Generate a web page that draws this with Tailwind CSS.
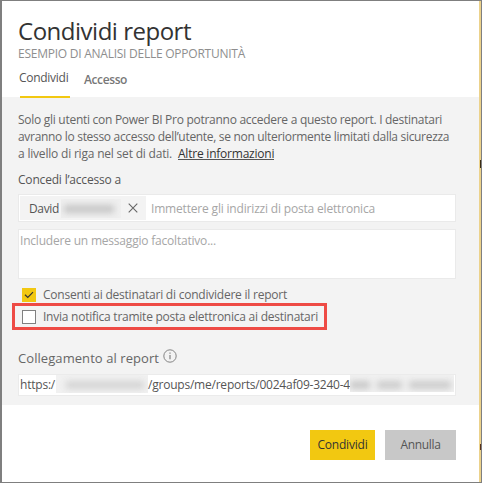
<!DOCTYPE html>
<html lang="it">
<head>
<meta charset="utf-8">
<title>Condividi report</title>
<script src="https://cdn.jsdelivr.net/npm/@tailwindcss/browser@4"></script>
</head>
<body class="h-[483px] w-[482px] overflow-hidden bg-[#7f7f7f] font-['Open_Sans',sans-serif] text-[12px] text-[#666]">
<div class="flex h-[483px] w-[482px] border-t border-b border-l-2 border-r border-[#7f7f7f] bg-white">
  <main class="flex w-[477px] flex-col">
    <header class="flex h-24 shrink-0 flex-col pl-4 pt-[16px] whitespace-nowrap">
      <h1 class="h-7 text-[24px] leading-7 tracking-[-0.488px] text-[#333]">Condividi report</h1>
      <p class="mt-[2px] h-[14px] leading-[14px] tracking-[-0.248px] text-[#8e8e8e]">ESEMPIO DI ANALISI DELLE OPPORTUNITÀ</p>
      <nav class="mt-[8px] flex">
        <a class="relative ml-0.5 h-[29px] w-[50px] border-b-2 border-[#f2c811] leading-[17px] tracking-[-0.28px] text-[#555]"><span class="-ml-px">Condividi</span></a>
        <a class="ml-[14px] pt-[2px] leading-[17px] font-semibold tracking-[-0.396px] text-[#777]">Accesso</a>
      </nav>
    </header>
    <section class="flex h-[308px] shrink-0 flex-col bg-[#f3f3f3] pl-4 pt-[14px] whitespace-nowrap">
      <div class="h-[51px] leading-[17px]">
        <p class="tracking-[-0.278px]">Solo gli utenti con Power BI Pro potranno accedere a questo report. I destinatari</p>
        <p class="tracking-[-0.311px]">avranno lo stesso accesso dell’utente, se non ulteriormente limitati dalla sicurezza</p>
        <p class="flex"><span class="w-40 tracking-[-0.198px]">a livello di riga nel set di dati.</span><a class="h-[15px] border-b border-[#555] tracking-[-0.22px] text-[#333]">Altre informazioni</a></p>
      </div>
      <h2 class="mt-[9px] h-[17px] leading-[17px] tracking-[-0.185px] text-[#555]">Concedi l’accesso a</h2>
      <div class="mt-[6px] flex h-7 w-[438px] border border-[#eaeaea] bg-white p-px leading-[25px]">
        <div class="flex w-[126px] items-center bg-[#f3f3f3] pl-[9px]">
          <span class="tracking-[-0.348px] text-[#555]">David</span>
          <span class="ml-[2px] h-[19px] w-[60px] overflow-hidden bg-[#ececec]/60"><span class="mt-[6px] ml-[3px] block h-[8px] w-[50px] bg-[#c6c6c6] blur-[3px]"></span></span>
          <svg class="ml-[6px] size-[12px]" viewBox="0 0 12 12" fill="none" stroke="#666" stroke-width="1.1"><path d="M1.7 1.7l8.6 8.6M10.3 1.7l-8.6 8.6"/></svg>
        </div>
        <span class="pl-[5px] tracking-[-0.181px] text-[#a6a6a6]">Immettere gli indirizzi di posta elettronica</span>
      </div>
      <div class="mt-[7px] h-[50px] w-[438px] border border-[#eaeaea] bg-white pt-[2px] pl-px leading-[17px] tracking-[-0.203px] text-[#a6a6a6]">Includere un messaggio facoltativo...</div>
      <div class="mt-[7px] flex h-[17px] items-center pl-1 tracking-[-0.228px]">
        <svg class="mr-[7px] size-[14px] bg-[#f2c811]" viewBox="0 0 14 14" fill="none" stroke="#333" stroke-width="1.2"><path d="M3 6.8l2.8 2.7L11 4.2"/></svg>Consenti ai destinatari di condividere il report
      </div>
      <div class="-ml-1.5 flex h-[27px] w-[315px] items-center border-3 border-[#ee4b45] pl-[7px] tracking-[-0.244px]">
        <span class="mr-[7px] size-[14px] border border-[#808080] bg-white"></span>Invia notifica tramite posta elettronica ai destinatari
      </div>
      <div class="mt-[18px] flex h-5 text-[13px] leading-5 tracking-[0.068px]">Collegamento al report
        <svg class="ml-[4px] mt-px size-[14px]" viewBox="0 0 14 14" fill="none" stroke="#777"><circle cx="7" cy="7" r="6.2" stroke-width=".9"/><path d="M7 6v4.2M7 3.6v1.2" stroke-width="1.1"/></svg>
      </div>
      <div class="mt-[6px] flex h-[22px] w-[438px] border border-[#ebebeb] bg-white pl-px leading-5 text-[#555]">
        <span class="w-9 tracking-[-0.218px]">https:/</span>
        <span class="h-[18px] w-[92px] overflow-hidden bg-[#f1f1f1]"><span class="mt-[6px] ml-[10px] block h-[8px] w-[78px] bg-[#d4d4d4] blur-[3px]"></span></span>
        <span class="w-[202px] tracking-[-0.221px]">/groups/me/reports/0024af09-3240-4</span>
        <span class="h-[17px] w-[104px] overflow-hidden bg-[#f1f1f1]"><span class="mt-[6px] flex gap-[7px] blur-[3px]"><i class="h-[8px] w-[20px] bg-[#c8c8c8]"></i><i class="h-[8px] w-[25px] bg-[#cccccc]"></i><i class="h-[8px] w-[42px] bg-[#cccccc]"></i></span></span>
      </div>
    </section>
    <footer class="flex gap-[10px] pl-[308px] pt-[25px] leading-[30px]">
      <button class="h-[30px] w-[65px] bg-[#f2c811] tracking-[-0.211px] text-[#333]">Condividi</button>
      <button class="h-[30px] w-[71px] bg-[#c8c8c8] tracking-[-0.342px] text-[#555]">Annulla</button>
    </footer>
  </main>
  <div class="flex w-[2px] flex-col bg-[#ecd28b]">
    <span class="mt-[159px] ml-px h-[8px] w-px bg-[#3b2c12]"></span>
    <span class="mt-[276px] ml-px h-[6px] w-px bg-[#5a3018]"></span>
  </div>
</div>
</body>
</html>
